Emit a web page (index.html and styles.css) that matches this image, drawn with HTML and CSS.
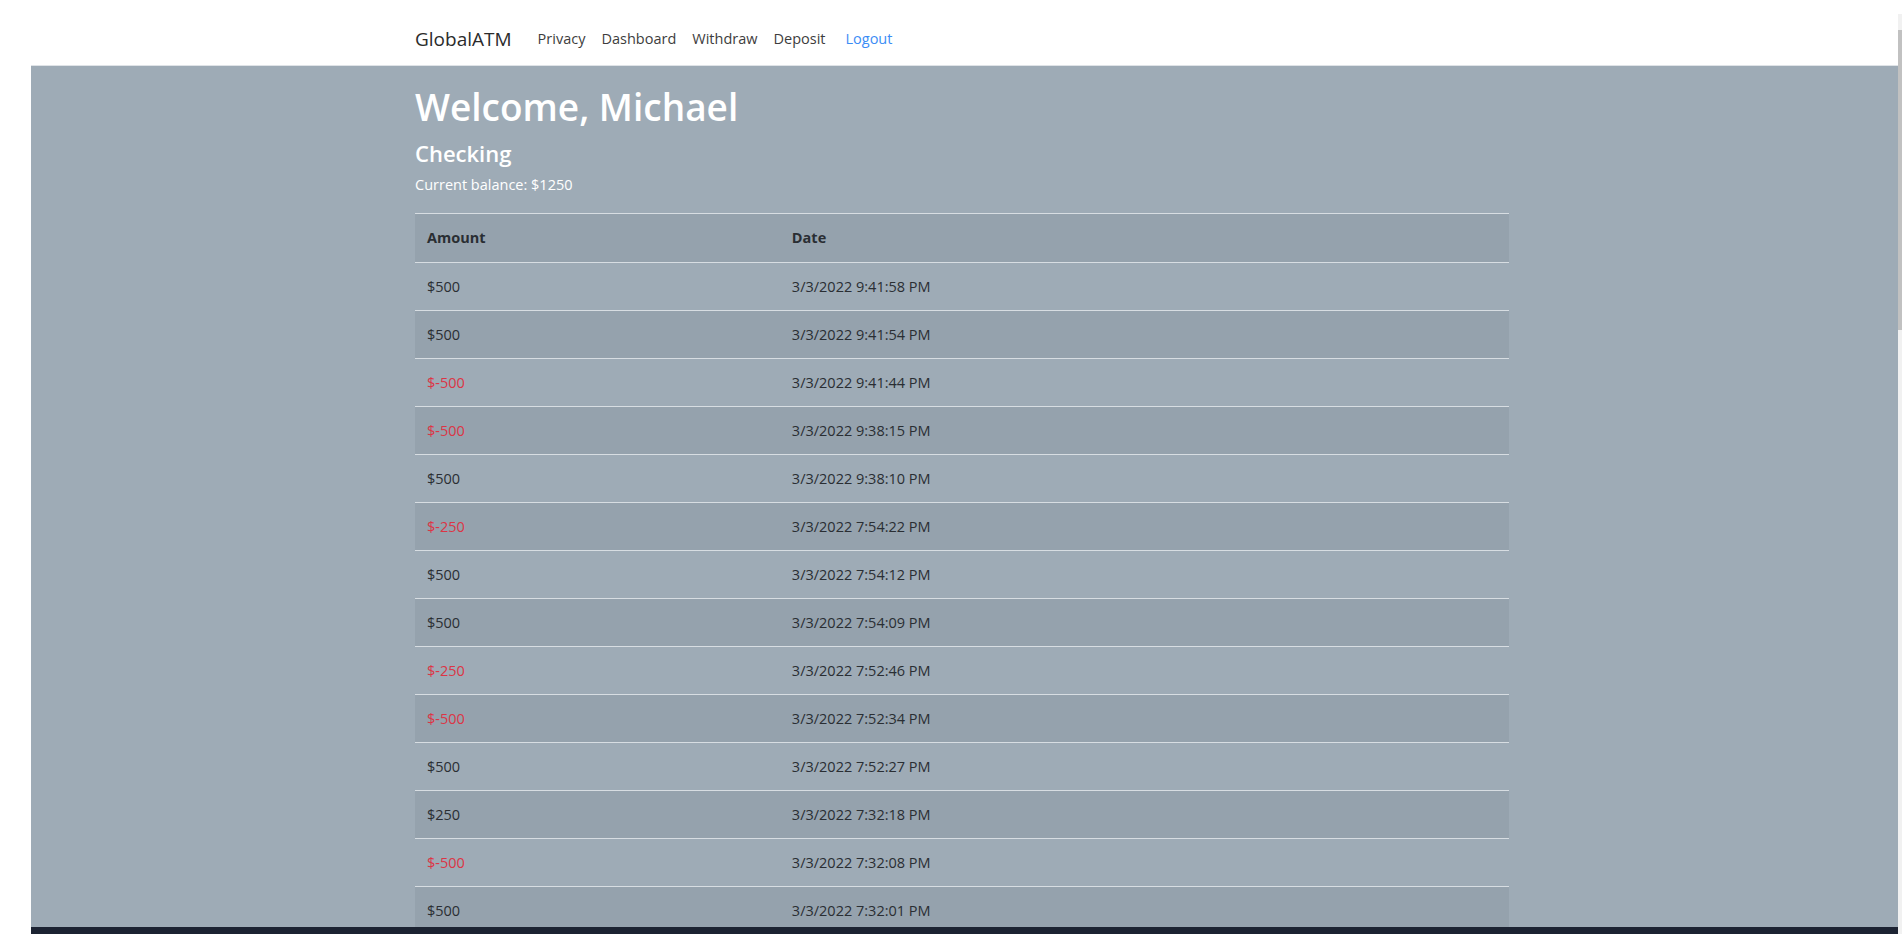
FILE: index.html
```html
<!DOCTYPE html>
<html lang="en">
<head>
<meta charset="utf-8">
<title>GlobalATM - Dashboard</title>
<link rel="stylesheet" href="styles.css">
</head>
<body>
<header class="navbar">
  <div class="container nav-inner">
    <a class="brand" href="#">GlobalATM</a>
    <nav class="nav-links">
      <a class="nav-link" href="#">Privacy</a>
      <a class="nav-link" href="#">Dashboard</a>
      <a class="nav-link" href="#">Withdraw</a>
      <a class="nav-link" href="#">Deposit</a>
      <a class="nav-link logout" href="#">Logout</a>
    </nav>
  </div>
</header>
<main class="stage">
  <div class="container">
    <h1 class="welcome">Welcome, Michael</h1>
    <h4 class="account">Checking</h4>
    <p class="balance">Current balance: $1250</p>
    <table class="tx-table">
      <thead>
        <tr><th class="col-amount">Amount</th><th>Date</th></tr>
      </thead>
      <tbody>
        <tr><td>$500</td><td>3/3/2022 9:41:58 PM</td></tr>
        <tr><td>$500</td><td>3/3/2022 9:41:54 PM</td></tr>
        <tr><td class="neg">$-500</td><td>3/3/2022 9:41:44 PM</td></tr>
        <tr><td class="neg">$-500</td><td>3/3/2022 9:38:15 PM</td></tr>
        <tr><td>$500</td><td>3/3/2022 9:38:10 PM</td></tr>
        <tr><td class="neg">$-250</td><td>3/3/2022 7:54:22 PM</td></tr>
        <tr><td>$500</td><td>3/3/2022 7:54:12 PM</td></tr>
        <tr><td>$500</td><td>3/3/2022 7:54:09 PM</td></tr>
        <tr><td class="neg">$-250</td><td>3/3/2022 7:52:46 PM</td></tr>
        <tr><td class="neg">$-500</td><td>3/3/2022 7:52:34 PM</td></tr>
        <tr><td>$500</td><td>3/3/2022 7:52:27 PM</td></tr>
        <tr><td>$250</td><td>3/3/2022 7:32:18 PM</td></tr>
        <tr><td class="neg">$-500</td><td>3/3/2022 7:32:08 PM</td></tr>
        <tr><td>$500</td><td>3/3/2022 7:32:01 PM</td></tr>
      </tbody>
    </table>
  </div>
</main>
<div class="scrollbar"><div class="thumb"></div></div>
</body>
</html>
```
FILE: styles.css
```css
* { box-sizing: border-box; }
html, body { height: 100%; }
body {
  margin: 0;
  background: #ffffff;
  font-family: "Open Sans", "Noto Sans", "Liberation Sans", sans-serif;
  color: #212529;
  display: flex;
  flex-direction: column;
  overflow: hidden;
}
.container {
  width: 1094px;
  margin-left: 415px;
}
.stage .container { margin-left: 384px; }

.navbar {
  height: 65px;
  flex: none;
  padding-top: 25px;
  margin-right: 4px;
}
.nav-inner {
  display: flex;
  align-items: center;
}
.brand {
  font-size: 19px;
  color: #2b2b2b;
  text-decoration: none;
  margin-right: 18px;
  line-height: 28px;
}
.nav-links { display: flex; align-items: center; }
.nav-link {
  font-size: 14.5px;
  color: #3d3d3d;
  text-decoration: none;
  padding: 0 8px;
  line-height: 24px;
}
.nav-link.logout { color: #3b8df5; margin-left: 4px; }

.stage {
  flex: 1;
  margin-left: 31px;
  margin-right: 4px;
  background: #9eabb6;
  border-top: 1px solid #dfe3e7;
  border-bottom: 7px solid #1c2332;
  overflow: hidden;
}
.welcome {
  margin: 0;
  padding-top: 17px;
  font-size: 37px;
  font-weight: 600;
  line-height: 48px;
  color: #ffffff;
}
.account {
  margin: 7px 0 0;
  font-size: 22px;
  font-weight: 600;
  line-height: 30px;
  color: #ffffff;
}
.balance {
  margin: 5px 0 0;
  font-size: 14.5px;
  line-height: 24px;
  color: #ffffff;
}
.tx-table {
  margin-top: 16px;
  width: 100%;
  border-collapse: collapse;
  font-size: 14.5px;
}
.tx-table th, .tx-table td {
  text-align: left;
  padding: 12px 12px;
  line-height: 23px;
  border-top: 1px solid #d7dde2;
  color: #2a2e33;
}
.tx-table th { font-weight: 700; line-height: 24px; }
.tx-table thead tr { background: #95a2ad; }
.tx-table tbody tr:nth-child(even) { background: #95a2ad; }
.col-amount { width: 33.35%; }
.tx-table td.neg { color: #dc3545; }

.scrollbar {
  position: fixed;
  right: 0;
  top: 14px;
  bottom: 0;
  width: 4px;
  background: #f1f1f1;
}
.thumb {
  margin-top: 16px;
  height: 300px;
  background: #c1c1c1;
}
```
